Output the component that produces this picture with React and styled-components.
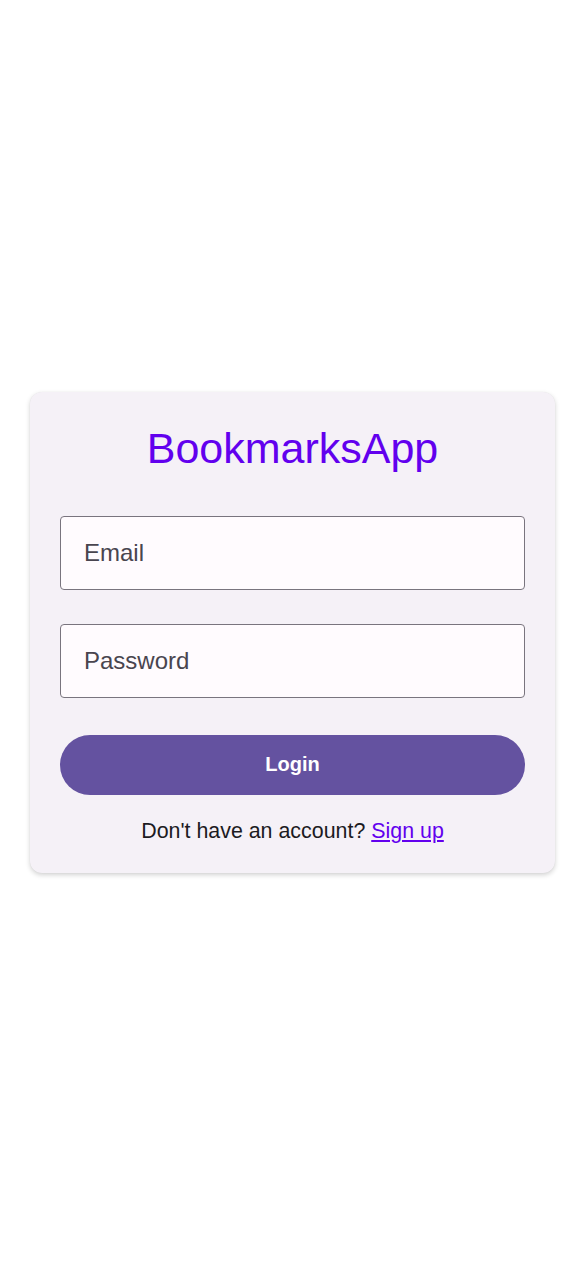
import React from "react";
import styled, { createGlobalStyle } from "styled-components";

const GlobalStyle = createGlobalStyle`
  html, body {
    margin: 0;
    padding: 0;
    background: #ffffff;
    font-family: "Liberation Sans", Arial, Helvetica, sans-serif;
  }
  * { box-sizing: border-box; }
`;

const Page = styled.div`
  min-height: 100vh;
  display: flex;
  align-items: center;
  justify-content: center;
  padding: 0 31px 2px 30px;
`;

const Card = styled.form`
  width: 100%;
  background: #f5f1f7;
  border-radius: 12px;
  box-shadow: 0 2px 5px rgba(0, 0, 0, 0.18), 0 0 1px rgba(0, 0, 0, 0.08);
  padding: 30px;
  display: flex;
  flex-direction: column;
`;

const Title = styled.h1`
  margin: 4px 0 45px;
  text-align: center;
  font-size: 43px;
  font-weight: 400;
  line-height: 45px;
  color: #6200ee;
`;

const Field = styled.input`
  width: 100%;
  height: 74px;
  border: 1px solid #79747e;
  border-radius: 4px;
  background: #fffbfe;
  padding: 0 23px;
  font-family: inherit;
  font-size: 24px;
  color: #1c1b1f;
  margin-bottom: ${(p) => p.$gap}px;
  outline: none;
  &::placeholder {
    color: #49454f;
    opacity: 1;
  }
`;

const Button = styled.button`
  width: 100%;
  height: 60px;
  border: none;
  border-radius: 30px;
  background: #6452a0;
  color: #ffffff;
  font-family: inherit;
  font-size: 20px;
  font-weight: 700;
  cursor: pointer;
`;

const Footer = styled.p`
  margin: 24px 0 0;
  text-align: center;
  font-size: 21.4px;
  line-height: 24px;
  color: #1c1b1f;
`;

const Link = styled.a`
  color: #6200ee;
  text-decoration: underline;
`;

export default function App() {
  return (
    <>
      <GlobalStyle />
      <Page>
        <Card onSubmit={(e) => e.preventDefault()}>
          <Title>BookmarksApp</Title>
          <Field type="email" placeholder="Email" $gap={34} />
          <Field type="password" placeholder="Password" $gap={37} />
          <Button type="submit">Login</Button>
          <Footer>
            Don't have an account? <Link href="#">Sign up</Link>
          </Footer>
        </Card>
      </Page>
    </>
  );
}
